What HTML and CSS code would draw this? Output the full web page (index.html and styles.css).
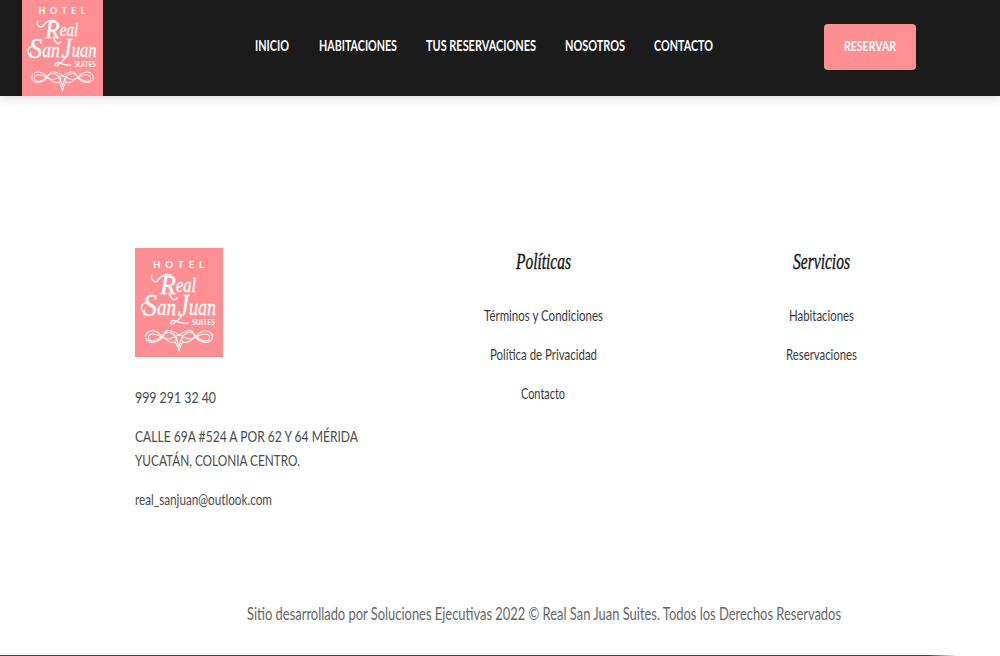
FILE: index.html
```html
<!DOCTYPE html>
<html lang="es">
<head>
<meta charset="utf-8">
<title>Real San Juan Suites</title>
<link rel="stylesheet" href="styles.css">
</head>
<body>
<svg class="defs" width="0" height="0" aria-hidden="true">
  <symbol id="logo" viewBox="0 0 88 109" preserveAspectRatio="none">
    <rect width="88" height="109" fill="#ff8f92"/>
    <g fill="#fff">
      <text class="logo-sans" x="18" y="19.6" font-size="9.8" textLength="51">HOTEL</text>
      <text class="logo-script" x="25" y="46" font-size="27" textLength="16" lengthAdjust="spacingAndGlyphs">R</text>
      <text class="logo-script" x="41" y="44" font-size="21" textLength="20" lengthAdjust="spacingAndGlyphs">eal</text>
      <text class="logo-script" x="8" y="67.5" font-size="32" textLength="14" lengthAdjust="spacingAndGlyphs">S</text>
      <text class="logo-script" x="22" y="67" font-size="24" textLength="19" lengthAdjust="spacingAndGlyphs">an</text>
      <text class="logo-script" x="43" y="68" font-size="31" textLength="11" lengthAdjust="spacingAndGlyphs">J</text>
      <text class="logo-script" x="54" y="67" font-size="24" textLength="27" lengthAdjust="spacingAndGlyphs">uan</text>
      <text class="logo-sans" x="57" y="77.2" font-size="7.6" textLength="23" lengthAdjust="spacingAndGlyphs">SUITES</text>
    </g>
    <g fill="none" stroke="#fff" stroke-linecap="round">
      <path stroke-width="1.4" d="M17 27C15 33 21 36 24 31C27 27 32 26 36 27M34 45C36 51 39 54 42 50M11 66C4 63 5 54 14 55M47 67C43 74 34 79 36 74C39 69 43 77 53 75"/>
      <g id="flourish" stroke-width="1.05">
        <path d="M44 87C38 83 31 80 29 86C27 93 15 98 11 91C9 86 14 82 19 83C28 85 32 97 40 94C43 92 41 87 36 85C28 82 26 93 18 93C12 93 12 87 17 86C25 85 29 94 37 90C40 89 42 87 44 87"/>
        <path d="M40 94C42 96 43 99 44 103M41 89L44 98"/>
      </g>
      <use href="#flourish" transform="matrix(-1 0 0 1 88 0)"/>
    </g>
  </symbol>
</svg>

<header class="header">
  <a class="brand"><svg width="81" height="100"><use href="#logo" width="81" height="100"/></svg></a>
  <nav class="nav">
    <a><svg width="34" height="20"><text y="15" textLength="34" lengthAdjust="spacingAndGlyphs">INICIO</text></svg></a>
    <a><svg width="78" height="20"><text y="15" textLength="78" lengthAdjust="spacingAndGlyphs">HABITACIONES</text></svg></a>
    <a><svg width="110" height="20"><text y="15" textLength="110" lengthAdjust="spacingAndGlyphs">TUS RESERVACIONES</text></svg></a>
    <a><svg width="60" height="20"><text y="15" textLength="60" lengthAdjust="spacingAndGlyphs">NOSOTROS</text></svg></a>
    <a><svg width="59" height="20"><text y="15" textLength="59" lengthAdjust="spacingAndGlyphs">CONTACTO</text></svg></a>
  </nav>
  <a class="reserve"><svg width="52" height="20"><text y="14.2" textLength="52" lengthAdjust="spacingAndGlyphs">RESERVAR</text></svg></a>
</header>

<footer class="footer">
  <div class="columns">
    <section class="contact">
      <svg class="footer-logo" width="88" height="109"><use href="#logo" width="88" height="109"/></svg>
      <p><svg width="82" height="24"><text y="17" textLength="81" lengthAdjust="spacingAndGlyphs">999 291 32 40</text></svg></p>
      <p>
        <svg width="224" height="24"><text y="17" textLength="223" lengthAdjust="spacingAndGlyphs">CALLE 69A #524 A POR 62 Y 64 MÉRIDA</text></svg>
        <svg width="166" height="24"><text y="17" textLength="165" lengthAdjust="spacingAndGlyphs">YUCATÁN, COLONIA CENTRO.</text></svg>
      </p>
      <p><svg width="138" height="24"><text y="17" textLength="137" lengthAdjust="spacingAndGlyphs">real_sanjuan@outlook.com</text></svg></p>
    </section>
    <section class="links policies">
      <h4><svg width="58" height="30"><text x="1" y="21" textLength="55" lengthAdjust="spacingAndGlyphs">Políticas</text></svg></h4>
      <a><svg width="120" height="24"><text y="17" textLength="119" lengthAdjust="spacingAndGlyphs">Términos y Condiciones</text></svg></a>
      <a><svg width="108" height="24"><text y="17" textLength="107" lengthAdjust="spacingAndGlyphs">Política de Privacidad</text></svg></a>
      <a><svg width="45" height="24"><text y="17" textLength="44" lengthAdjust="spacingAndGlyphs">Contacto</text></svg></a>
    </section>
    <section class="links services">
      <h4><svg width="60" height="30"><text x="1" y="21" textLength="57" lengthAdjust="spacingAndGlyphs">Servicios</text></svg></h4>
      <a><svg width="66" height="24"><text y="17" textLength="65" lengthAdjust="spacingAndGlyphs">Habitaciones</text></svg></a>
      <a><svg width="72" height="24"><text y="17" textLength="71" lengthAdjust="spacingAndGlyphs">Reservaciones</text></svg></a>
    </section>
  </div>
  <p class="copyright"><svg width="595" height="24"><text y="18" textLength="594" lengthAdjust="spacingAndGlyphs">Sitio desarrollado por Soluciones Ejecutivas 2022 © Real San Juan Suites. Todos los Derechos Reservados</text></svg></p>
  <div class="edge"></div>
</footer>
</body>
</html>
```
FILE: styles.css
```css
* { box-sizing: border-box; }

body {
  margin: 0;
  height: 656px;
  display: flex;
  flex-direction: column;
  overflow: hidden;
  background: #fff;
  font-family: Lato, "Open Sans", sans-serif;
}

svg { display: block; overflow: visible; }
.defs { position: absolute; }

.logo-sans { font-family: Lato, sans-serif; font-weight: 700; }
.logo-script { font-family: "Liberation Serif", serif; font-style: italic; font-weight: 400; stroke: #fff; stroke-width: .35px; }

.header {
  flex: none;
  display: flex;
  height: 96px;
  padding-left: 22px;
  background: #1b1b1b;
  box-shadow: 0 2px 10px rgba(0, 0, 0, .15);
}

.brand { width: 81px; height: 96px; overflow: hidden; }
.brand svg { margin-top: -4px; }

.nav {
  display: flex;
  gap: 29.3px;
  margin: 36px 0 0 152.3px;
  font-size: 14.5px;
  font-weight: 700;
  fill: #fff;
}

.reserve {
  display: flex;
  justify-content: center;
  align-items: center;
  width: 92px;
  height: 46px;
  margin: 24px 0 0 110.5px;
  border-radius: 4px;
  background: #ff8f92;
  font-size: 12.4px;
  font-weight: 700;
  fill: #fff;
}

.footer {
  flex: 1;
  display: flex;
  flex-direction: column;
  padding-top: 152px;
}

.columns { display: flex; height: 354px; padding-left: 135px; }

.contact { width: 270px; font-size: 15px; fill: #4b4b4b; }
.footer-logo { margin-bottom: 28.5px; }
.contact p { margin: 0 0 15px; }

.links {
  display: flex;
  flex-direction: column;
  align-items: center;
  gap: 15px;
  width: 277px;
  font-size: 15px;
  fill: #3a3a3a;
}
.services { width: 279px; }
.links h4 {
  margin: 0 0 10.5px;
  font: italic 400 23px "Liberation Serif", serif;
  fill: #151515;
  stroke: #151515;
  stroke-width: .4px;
}

.copyright {
  margin: 0 0 0 247px;
  font-size: 17px;
  fill: #666;
}

.edge {
  width: 957px;
  height: 1px;
  margin-top: auto;
  background: linear-gradient(90deg, #444 97%, #fff);
}
```
